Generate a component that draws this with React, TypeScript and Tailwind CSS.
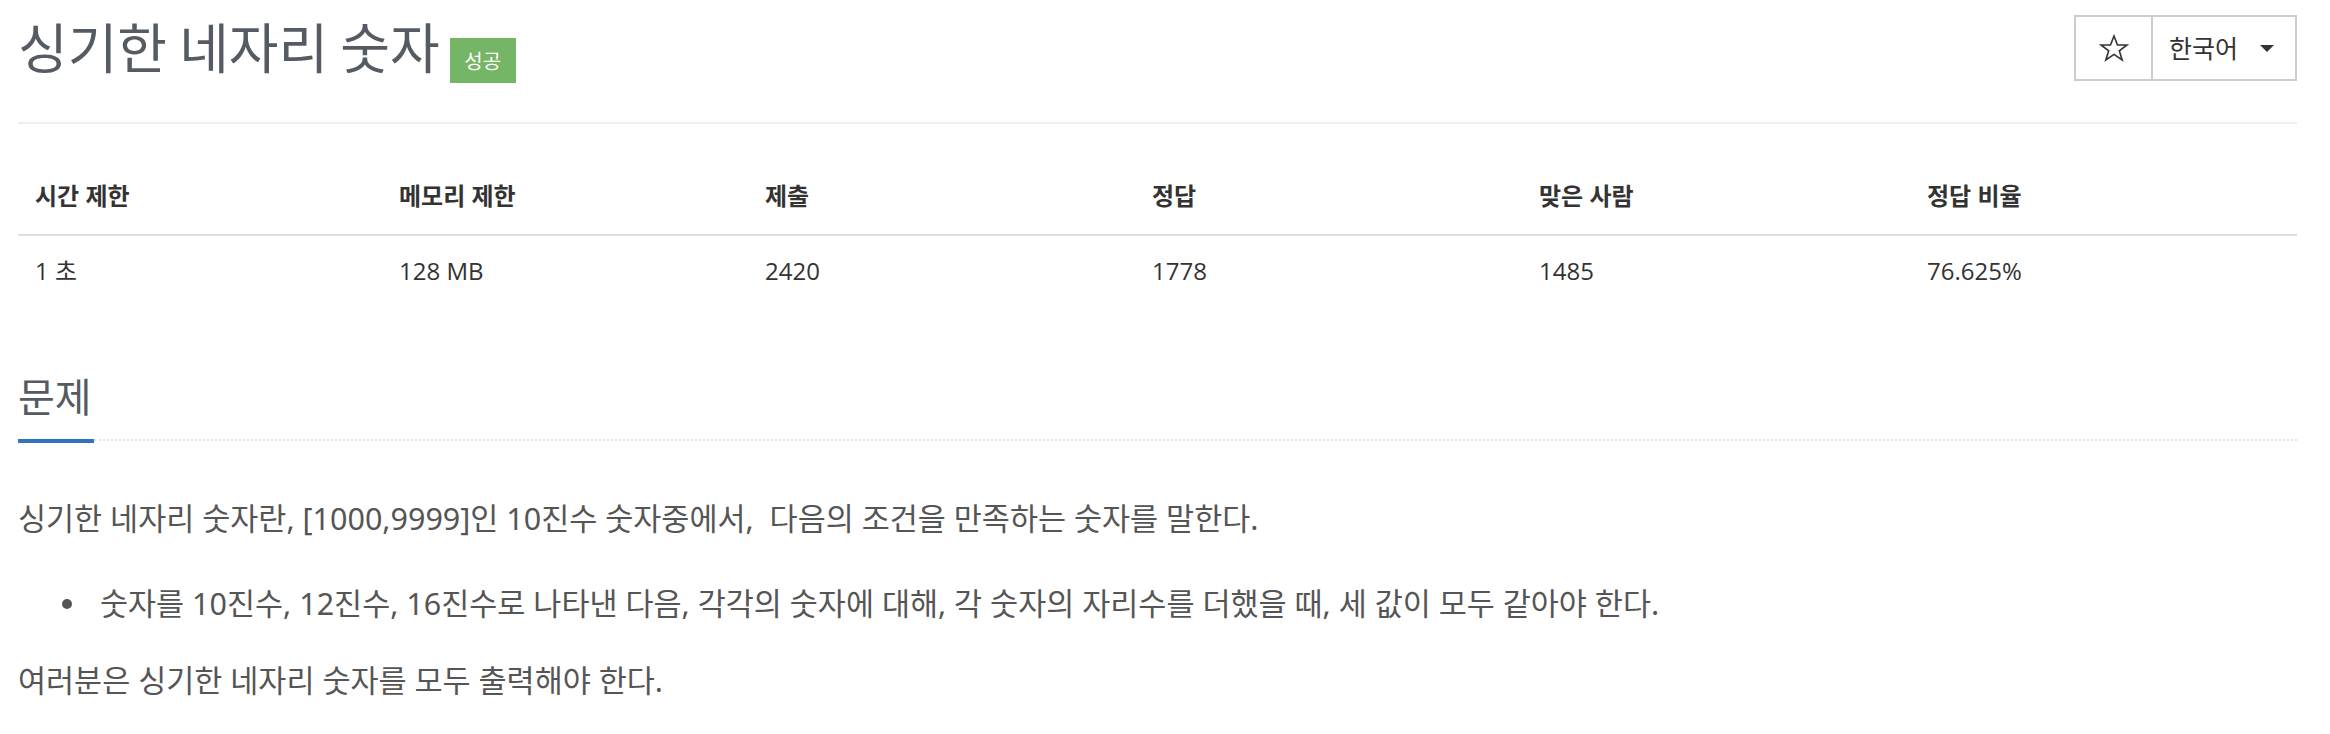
import React from 'react';

const KR = { fontFamily: '"Noto Sans CJK KR", sans-serif' };
const BODY = { fontFamily: '"Noto Sans", "Noto Sans CJK KR", sans-serif' };
const TABLE = { fontFamily: '"Open Sans", "Noto Sans CJK KR", sans-serif' };

const stats = [
  { label: '시간 제한', value: '1 초', w: 'w-[364px]' },
  { label: '메모리 제한', value: '128 MB', w: 'w-[366px]' },
  { label: '제출', value: '2420', w: 'w-[387px]' },
  { label: '정답', value: '1778', w: 'w-[387px]' },
  { label: '맞은 사람', value: '1485', w: 'w-[388px]' },
  { label: '정답 비율', value: '76.625%', w: 'flex-1' },
];

export default function App() {
  return (
    <div className="min-h-[734px] bg-white pl-[18px] pr-[33px]">
      {/* 제목 + 버튼 */}
      <div className="flex items-start justify-between border-b-2 border-[#eeeeee] h-[124px]">
        <div className="flex items-start mt-[16px]">
          <h1 className="text-[54px] leading-[59px] text-[#555b63]" style={KR}>
            싱기한 네자리 숫자
          </h1>
          <span
            className="ml-[10px] mt-[22px] w-[66px] h-[45px] bg-[#74b566] text-white text-[20px] flex items-center justify-center"
            style={KR}
          >
            성공
          </span>
        </div>
        <div className="flex mt-[15px] h-[66px] border-2 border-[#cccccc]">
          <button className="w-[77px] h-full flex items-center justify-center border-r-2 border-[#cccccc]">
            <svg width="30" height="28" viewBox="0 0 30 28">
              <polygon
                points="15,2 18.5,11 28,11 20.3,16.8 23.2,26 15,20.4 6.8,26 9.7,16.8 2,11 11.5,11"
                fill="none"
                stroke="#333"
                strokeWidth="1.6"
                strokeLinejoin="miter"
              />
            </svg>
          </button>
          <button className="w-[142px] h-full flex items-center pl-[16px] text-[25px] text-[#333]" style={KR}>
            한국어
            <span className="ml-[22px] w-0 h-0 border-l-[7px] border-r-[7px] border-t-[7px] border-l-transparent border-r-transparent border-t-[#333]" />
          </button>
        </div>
      </div>

      {/* 제한 표 */}
      <div className="mt-[55px] text-[24px] text-[#333]" style={TABLE}>
        <div className="flex border-b-2 border-[#dddddd] pb-[21px] leading-[34px] font-bold">
          {stats.map((s) => (
            <div key={s.label} className={`${s.w} pl-[17px]`}>{s.label}</div>
          ))}
        </div>
        <div className="flex pt-[18px] pb-[15px] leading-[34px]">
          {stats.map((s) => (
            <div key={s.label} className={`${s.w} pl-[17px]`}>{s.value}</div>
          ))}
        </div>
      </div>

      {/* 문제 */}
      <div className="mt-[70px]">
        <h2 className="text-[40px] leading-[44px] text-[#555b63] pb-[22px]" style={KR}>문제</h2>
        <div className="flex items-start">
          <div className="w-[76px] h-[4px] bg-[#3074c0]" />
          <div className="flex-1 border-t-2 border-dotted border-[#e4e4e4]" />
        </div>
      </div>

      <div className="text-[30.5px] leading-[43px] text-[#555555]" style={BODY}>
        <p className="mt-[54px]">싱기한 네자리 숫자란, [1000,9999]인 10진수 숫자중에서,&nbsp; 다음의 조건을 만족하는 숫자를 말한다.</p>
        <div className="mt-[42px] flex items-center ml-[44px]">
          <span className="w-[10px] h-[10px] rounded-full bg-[#555555]" />
          <span className="ml-[28px]">숫자를 10진수, 12진수, 16진수로 나타낸 다음, 각각의 숫자에 대해, 각 숫자의 자리수를 더했을 때, 세 값이 모두 같아야 한다.</span>
        </div>
        <p className="mt-[34px]">여러분은 싱기한 네자리 숫자를 모두 출력해야 한다.</p>
      </div>
    </div>
  );
}
